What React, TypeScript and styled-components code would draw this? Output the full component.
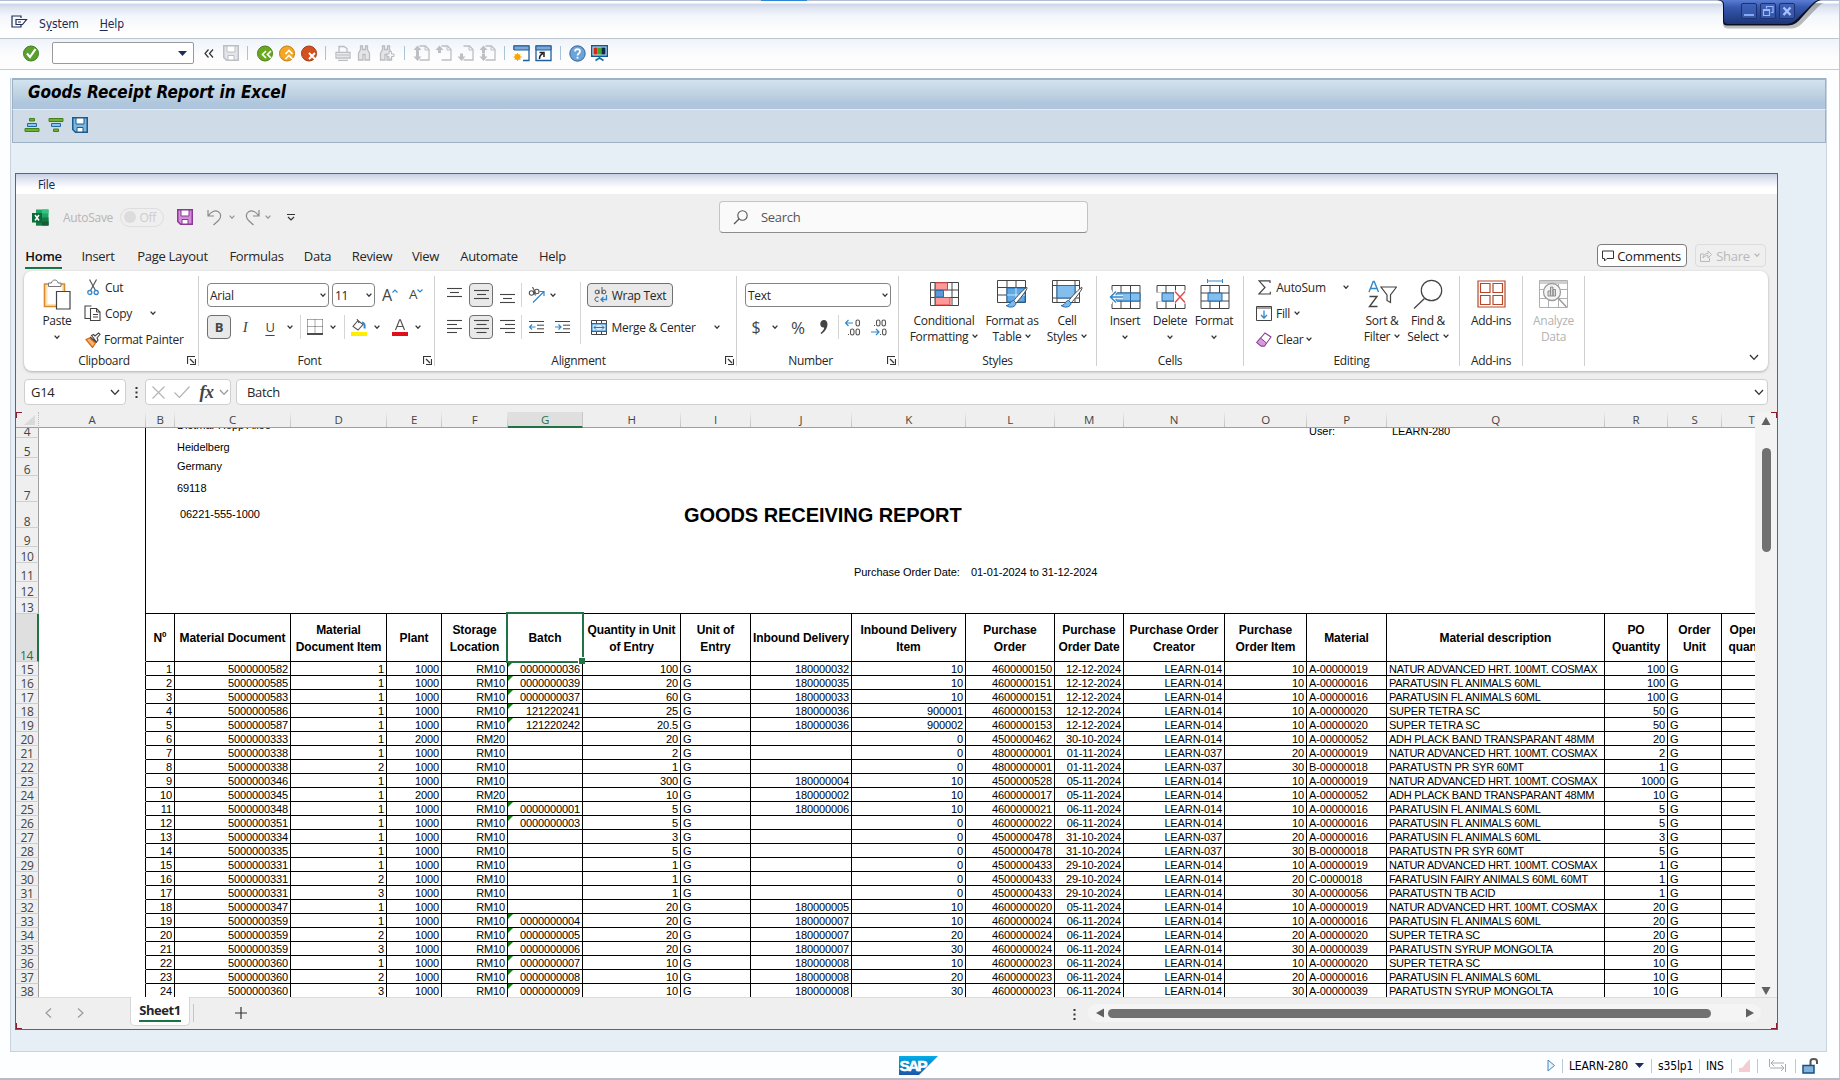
import React from 'react';
import styled, { createGlobalStyle, css } from 'styled-components';

const TAHOMA = `'DejaVu Sans Condensed', 'DejaVu Sans', Tahoma, sans-serif`;
const SEGOE = `'Open Sans', 'Noto Sans', 'Segoe UI', sans-serif`;
const ARIAL = `'Liberation Sans', Arial, sans-serif`;

const Global = createGlobalStyle`
  * { box-sizing: border-box; }
  html, body { margin: 0; padding: 0; overflow: hidden; }
  svg { display: block; flex: none; }
`;

/* ---------- SAP frame ---------- */

const Window = styled.div`
  position: relative;
  display: flex;
  flex-direction: column;
  width: 1840px;
  height: 1080px;
  padding-top: 1px;
  overflow: hidden;
  background: linear-gradient(#b3bdd4, #b3bdd4) top / 100% 1px no-repeat #fdfeff;
  border-right: 1px solid #b9c5d1;
  border-bottom: 2px solid #b7bcc4;
  font-family: ${TAHOMA};
  font-size: 12px;
  color: #1b2a55;
`;

const MenuBar = styled.div`
  display: flex;
  flex: none;
  align-items: center;
  height: 38px;
  padding: 8px 0 0 11px;
  border-bottom: 1px solid #bcc7d1;
  background: linear-gradient(#fff 0, #fff 2px, #cdd6e8 3px, #dfe5f1 7px, #f3f6fb 15px, #fefefe 30px);
`;

const MenuItem = styled.span<{ $ml: number }>`
  margin-left: ${(p) => p.$ml}px;
  letter-spacing: -0.1px;
  white-space: pre;
  u { text-underline-offset: 2px; }
`;

const ToolBar = styled.div`
  display: flex;
  flex: none;
  align-items: center;
  height: 31px;
  padding-bottom: 2px;
  border-bottom: 1px solid #c3ccd6;
  background: linear-gradient(#eff3f9, #fdfdfe 60%);
`;

const Slot = styled.div<{ $w?: number; $ml?: number; $h?: number; $mt?: number }>`
  display: flex;
  flex: none;
  align-items: center;
  justify-content: center;
  width: ${(p) => (p.$w ? `${p.$w}px` : 'auto')};
  height: ${(p) => (p.$h ? `${p.$h}px` : 'auto')};
  margin-left: ${(p) => p.$ml ?? 0}px;
  margin-top: ${(p) => p.$mt ?? 0}px;
`;

const CommandField = styled.div`
  display: flex;
  flex: none;
  align-items: center;
  justify-content: flex-end;
  width: 142px;
  height: 22px;
  margin-left: 12px;
  padding-right: 6px;
  border: 1px solid #9a9a9a;
  border-radius: 2px;
  background: #fff;
`;

const VLine = styled.div<{ $h?: number; $c?: string; $ml?: number; $mt?: number }>`
  flex: none;
  width: 1px;
  height: ${(p) => p.$h ?? 14}px;
  margin-left: ${(p) => p.$ml ?? 0}px;
  margin-top: ${(p) => p.$mt ?? 0}px;
  background: ${(p) => p.$c ?? '#a9c4d8'};
`;

const Content = styled.div`
  display: flex;
  flex: none;
  flex-direction: column;
  width: 1817px;
  height: 974px;
  margin: 8px 0 0 10px;
  border: solid #c9d3df;
  border-width: 0 1px 1px;
  background: #e7eff6;
`;

const TitleStrip = styled.div`
  flex: none;
  display: flex;
  align-items: center;
  height: 31px;
  margin-left: 1px;
  padding: 0 0 6px 15px;
  border: 1px solid #9db2c4;
  border-top-width: 2px;
  border-bottom: 0;
  background: linear-gradient(#d3e3f0, #bcd0df 55%, #b0c8de 75%, #adc4dc);
  color: #000;
  font-size: 17px;
  font-weight: bold;
  font-style: italic;
  letter-spacing: 0;
`;

const AppStrip = styled.div`
  flex: none;
  display: flex;
  align-items: center;
  gap: 7px;
  height: 34px;
  margin-left: 1px;
  padding: 0 0 3px 11px;
  border: 1px solid #9db2c4;
  border-top-color: #e4edf4;
  background: #cfdce7;
`;

const StatusBar = styled.div`
  flex: 1;
  display: flex;
  align-items: center;
  padding: 1px 0 0 899px;
  color: #000;
`;

const SmallText = styled.span<{ $w: number; $ml: number }>`
  flex: none;
  width: ${(p) => p.$w}px;
  margin-left: ${(p) => p.$ml}px;
  margin-top: 1px;
  white-space: nowrap;
  letter-spacing: -0.15px;
`;

const WindowButtons = styled.div`
  position: absolute;
  top: 0;
  left: 1716px;
`;

const TopAccent = styled.div`
  position: absolute;
  top: 0;
  left: 761px;
  width: 46px;
  height: 1px;
  background: #2f86d6;
`;

/* ---------- Excel window ---------- */

const Excel = styled.div`
  position: relative;
  display: flex;
  flex: none;
  flex-direction: column;
  width: 1763px;
  height: 857px;
  margin: 30px 0 0 4px;
  border: 1px solid #5d6670;
  background: #efefef;
  font-family: ${SEGOE};
  font-size: 12px;
  letter-spacing: -0.3px;
  color: #262626;
  overflow: hidden;
`;

const FileBar = styled.div`
  flex: none;
  display: flex;
  align-items: center;
  height: 20px;
  padding: 2px 0 0 22px;
  background: linear-gradient(#c6cfe2 0, #dbe1ee 4px, #fff 14px);
  color: #1b2a55;
  font-family: ${TAHOMA};
  font-size: 12px;
`;

const QuickBar = styled.div`
  flex: none;
  display: flex;
  align-items: center;
  height: 46px;
  padding-left: 16px;
`;

const Muted = styled.span`
  color: #b5b5b5;
`;

const Toggle = styled.div`
  display: flex;
  flex: none;
  align-items: center;
  justify-content: space-between;
  width: 44px;
  height: 19px;
  margin-left: 7px;
  padding: 0 7px 0 3px;
  border: 1px solid #dedede;
  border-radius: 10px;
  color: #cdcdcd;
  i { width: 12px; height: 12px; border-radius: 50%; background: #dcdcdc; }
`;

const SearchBox = styled.div`
  flex: none;
  display: flex;
  align-items: center;
  width: 369px;
  height: 32px;
  margin-left: 419px;
  padding-left: 13px;
  border: 1px solid #c4c4c4;
  border-bottom-color: #8c8c8c;
  border-radius: 4px;
  background: #fafafa;
  color: #555;
  font-size: 13px;
  gap: 12px;
`;

const TabBar = styled.div`
  flex: none;
  display: flex;
  align-items: center;
  height: 31px;
  padding: 2px 0 0 9px;
  font-size: 13px;
`;

const Tab = styled.div<{ $w: number; $ml?: number; $active?: boolean }>`
  flex: none;
  display: flex;
  justify-content: center;
  width: ${(p) => p.$w}px;
  height: 25px;
  margin-left: ${(p) => p.$ml ?? 0}px;
  padding-top: 3px;
  white-space: nowrap;
  border-bottom: 2px solid ${(p) => (p.$active ? '#1a7344' : 'transparent')};
  ${(p) => p.$active && css`font-weight: 600; color: #111;`}
`;

const TabButton = styled.div<{ $w: number; $ml: number; $off?: boolean }>`
  flex: none;
  display: flex;
  align-items: center;
  justify-content: space-between;
  width: ${(p) => p.$w}px;
  height: 23px;
  margin: 0 0 2px ${(p) => p.$ml}px;
  padding: 0 5px 0 4px;
  border: 1px solid ${(p) => (p.$off ? '#dcdcdc' : '#7b7b7b')};
  border-radius: 4px;
  background: ${(p) => (p.$off ? '#efefef' : '#fff')};
  color: ${(p) => (p.$off ? '#b9b9b9' : '#1c1c1c')};
`;

const Ribbon = styled.div`
  flex: none;
  display: flex;
  width: 1744px;
  height: 100px;
  margin-left: 8px;
  border-radius: 8px;
  background: #fff;
  box-shadow: 0 1px 3px rgba(0, 0, 0, 0.28);
`;

const Group = styled.div<{ $w: number }>`
  position: relative;
  flex: none;
  display: flex;
  flex-direction: column;
  width: ${(p) => p.$w}px;
  height: 90px;
  margin-top: 5px;
  border-right: 1px solid #d0d0d0;
`;

const GroupBody = styled.div`
  flex: none;
  display: flex;
  height: 76px;
`;

const GroupLabel = styled.div`
  flex: none;
  display: flex;
  align-items: center;
  justify-content: center;
  height: 17px;
  span { flex: 1; text-align: center; }
`;

const Stack = styled.div<{ $ml?: number; $w?: number; $pt?: number }>`
  flex: none;
  display: flex;
  flex-direction: column;
  width: ${(p) => (p.$w ? `${p.$w}px` : 'auto')};
  margin-left: ${(p) => p.$ml ?? 0}px;
  padding-top: ${(p) => p.$pt ?? 0}px;
`;

const Line = styled.div<{ $h: number; $mt?: number }>`
  display: flex;
  flex: none;
  align-items: center;
  height: ${(p) => p.$h}px;
  margin-top: ${(p) => p.$mt ?? 0}px;
  white-space: nowrap;
`;

const BigButton = styled.div<{ $w: number; $ml?: number; $off?: boolean }>`
  flex: none;
  display: flex;
  flex-direction: column;
  align-items: center;
  width: ${(p) => p.$w}px;
  margin-left: ${(p) => p.$ml ?? 0}px;
  color: ${(p) => (p.$off ? '#b3b3b3' : '#262626')};
  white-space: nowrap;
`;

const BigIcon = styled.div`
  display: flex;
  align-items: center;
  justify-content: center;
  height: 36px;
`;

const BigLabel = styled.div`
  display: flex;
  align-items: center;
  justify-content: center;
  height: 16px;
  gap: 4px;
`;

const Combo = styled.div<{ $w: number; $ml?: number }>`
  flex: none;
  display: flex;
  align-items: center;
  justify-content: space-between;
  width: ${(p) => p.$w}px;
  height: 24px;
  margin-left: ${(p) => p.$ml ?? 0}px;
  padding: 0 2px;
  border: 1px solid #848484;
  border-radius: 4px;
  background: #fff;
`;

const Pressed = styled.div<{ $w: number; $ml?: number }>`
  flex: none;
  display: flex;
  align-items: center;
  justify-content: center;
  gap: 4px;
  width: ${(p) => p.$w}px;
  height: 24px;
  margin-left: ${(p) => p.$ml ?? 0}px;
  border: 1px solid #707070;
  border-radius: 4px;
  background: #e9e9e9;
`;

const Glyph = styled.span<{ $size: number; $serif?: boolean; $bold?: boolean; $it?: boolean; $ul?: boolean; $c?: string }>`
  font-size: ${(p) => p.$size}px;
  line-height: 1;
  color: ${(p) => p.$c ?? '#444'};
  font-weight: ${(p) => (p.$bold ? 700 : 400)};
  font-style: ${(p) => (p.$it ? 'italic' : 'normal')};
  font-family: ${(p) => (p.$serif ? `'Liberation Serif', serif` : 'inherit')};
  text-decoration: ${(p) => (p.$ul ? 'underline' : 'none')};
  text-underline-offset: 3px;
`;

const FormulaRow = styled.div`
  flex: none;
  display: flex;
  height: 26px;
  margin-top: 8px;
  padding-left: 8px;
  font-size: 13px;
`;

const Field = styled.div<{ $w: number; $ml?: number; $pl?: number; $pr?: number }>`
  flex: none;
  display: flex;
  align-items: center;
  justify-content: space-between;
  width: ${(p) => p.$w}px;
  height: 26px;
  margin-left: ${(p) => p.$ml ?? 0}px;
  padding: 0 ${(p) => p.$pr ?? 5}px 0 ${(p) => p.$pl ?? 6}px;
  border: 1px solid #cfcfcf;
  border-radius: 4px;
  background: #fff;
`;

/* ---------- Sheet ---------- */

const SheetArea = styled.div`
  flex: none;
  display: flex;
  height: 585px;
  margin-top: 7px;
`;

const Sheet = styled.div`
  flex: none;
  width: 1739px;
  height: 585px;
  overflow: hidden;
  background: #fff;
`;

const COLS = [107, 29, 116, 96, 55, 66, 75, 98, 70, 101, 114, 89, 69, 101, 82, 80, 218, 63, 54, 60];
const TEMPLATE = `23px ${COLS.map((c) => `${c}px`).join(' ')}`;

const ColumnHeads = styled.div`
  display: grid;
  grid-template-columns: ${TEMPLATE};
  height: 16px;
  background: #efefef;
  border-bottom: 1px solid #9f9f9f;
`;

const ColumnHead = styled.div<{ $on?: boolean }>`
  position: relative;
  display: flex;
  align-items: center;
  justify-content: center;
  height: ${(p) => (p.$on ? 16 : 15)}px;
  padding-top: ${(p) => (p.$on ? 2 : 1)}px;
  border-right: 1px solid;
  border-image: linear-gradient(#efefef, #bdbdbd) 1;
  background: ${(p) => (p.$on ? '#dfdfdf' : 'transparent')};
  color: ${(p) => (p.$on ? '#1f7246' : '#444')};
  ${(p) => p.$on && css`border-bottom: 2px solid #217346; border-image: none; border-right-color: #c8c8c8;`}
  font-size: 11.5px;
  line-height: 12px;
`;

const Corner = styled.div`
  display: flex;
  align-items: flex-end;
  justify-content: flex-end;
  padding: 0 3px 3px 0;
  border-right: 1px dotted #bbb;
`;

const RowHead = styled.div<{ $on?: boolean }>`
  display: flex;
  align-items: flex-end;
  justify-content: center;
  height: 100%;
  border-right: ${(p) => (p.$on ? '2px solid #217346' : '1px solid #9f9f9f')};
  border-bottom: 1px solid #cfcfcf;
  background: ${(p) => (p.$on ? '#dfdfdf' : '#efefef')};
  color: ${(p) => (p.$on ? '#1f7246' : '#444')};
  font-size: 12px;
  line-height: 11px;
`;

const FreeRow = styled.div<{ $h: number; $last?: boolean }>`
  display: flex;
  align-items: center;
  height: ${(p) => p.$h}px;
  overflow: hidden;
  font-family: ${ARIAL};
  ${RowHead} { flex: none; width: 23px; font-family: ${SEGOE}; }
`;

const Margin = styled.div`
  flex: none;
  width: 107px;
  height: 100%;
  border-right: 1px solid #000;
`;

const FreeBody = styled.div<{ $line?: boolean }>`
  flex: 1;
  display: flex;
  align-items: center;
  height: 100%;
  padding-bottom: 1px;
  border-bottom: ${(p) => (p.$line ? '1px solid #000' : '0')};
`;

const FreeText = styled.span<{ $ml: number; $w: number; $mt?: number; $title?: boolean }>`
  flex: none;
  width: ${(p) => p.$w}px;
  margin-left: ${(p) => p.$ml}px;
  margin-top: ${(p) => p.$mt ?? 0}px;
  color: #000;
  font-size: ${(p) => (p.$title ? 20 : 11)}px;
  font-weight: ${(p) => (p.$title ? 700 : 400)};
  line-height: 14px;
  letter-spacing: -0.06px;
  white-space: nowrap;
`;

const DataRow = styled.div<{ $h: number }>`
  display: grid;
  grid-template-columns: ${TEMPLATE};
  grid-template-rows: ${(p) => p.$h}px;
  height: ${(p) => p.$h}px;
`;

const Cell = styled.div<{ $left?: boolean; $blank?: boolean; $tight?: boolean }>`
  position: relative;
  height: 100%;
  padding: 0 ${(p) => (p.$left ? 0 : 2)}px 0 ${(p) => (p.$left ? 2 : 0)}px;
  border-right: 1px solid #000;
  border-bottom: 1px solid ${(p) => (p.$blank ? '#fff' : '#000')};
  background: #fff;
  color: #000;
  font-family: ${ARIAL};
  font-size: 11px;
  line-height: 15px;
  letter-spacing: ${(p) => (p.$tight ? -0.26 : -0.12)}px;
  text-align: ${(p) => (p.$left ? 'left' : 'right')};
  white-space: nowrap;
`;

const ErrorMark = styled.i`
  position: absolute;
  top: 0;
  left: 0;
  border-top: 5px solid #138013;
  border-right: 5px solid transparent;
`;

const HeadCell = styled(Cell)`
  display: flex;
  flex-direction: column;
  align-items: center;
  justify-content: center;
  padding: 2px 0 0;
  font-size: 12px;
  font-weight: 700;
  line-height: 17px;
  letter-spacing: -0.08px;
  sup { font-size: 8px; line-height: 0; vertical-align: 5px; }
`;

const Selection = styled.div`
  position: absolute;
  z-index: 2;
  inset: -2px -2px -2px -2px;
  border: 2px solid #217346;
  &::after {
    content: '';
    position: absolute;
    right: -3px;
    bottom: -3px;
    width: 6px;
    height: 6px;
    border: solid #fff;
    border-width: 1px 0 0 1px;
    background: #217346;
  }
`;

const VScroll = styled.div`
  flex: none;
  display: flex;
  flex-direction: column;
  align-items: center;
  width: 22px;
  height: 585px;
  padding-top: 4px;
  background: #f3f3f3;
  i { width: 9px; height: 104px; margin: 22px 0 434px; border-radius: 5px; background: #717171; }
`;

const SheetTabs = styled.div`
  flex: 1;
  display: flex;
  align-items: flex-start;
  border-top: 1px solid #dcdcdc;
`;

const SheetTab = styled.div`
  flex: none;
  display: flex;
  justify-content: center;
  width: 60px;
  height: 29px;
  margin: -1px 0 0 44px;
  padding-top: 4px;
  border: 1px solid #d6d6d6;
  border-top: 0;
  border-radius: 0 0 5px 5px;
  background: #fff;
  span {
    height: 21px;
    border-bottom: 2px solid #1a7344;
    font-size: 13px;
    font-weight: 700;
    letter-spacing: -0.4px;
    color: #262626;
  }
`;

const HScroll = styled.div`
  flex: none;
  display: flex;
  align-items: center;
  justify-content: space-between;
  width: 673px;
  height: 18px;
  margin: 6px 0 0 9px;
  padding: 0 6px 0 7px;
  border-radius: 9px;
  background: #f4f4f4;
  i { width: 603px; height: 9px; margin: 0 auto 0 3px; border-radius: 5px; background: #717171; }
`;

const RedCorner = styled.i<{ $x: number; $y: number; $r?: boolean; $b?: boolean }>`
  position: absolute;
  z-index: 3;
  left: ${(p) => p.$x}px;
  top: ${(p) => p.$y}px;
  width: 6px;
  height: 6px;
  border: solid #8b1a2b;
  border-width: ${(p) => `${p.$b ? 0 : 1}px ${p.$r ? 1 : 0}px ${p.$b ? 1 : 0}px ${p.$r ? 0 : 1}px`};
`;

/* ---------- Icons ---------- */

const Svg = ({ w = 16, h = 16, children, box }: { w?: number; h?: number; box?: string; children: React.ReactNode }) => (
  <svg width={w} height={h} viewBox={box ?? `0 0 ${w} ${h}`} fill="none">
    {children}
  </svg>
);

const Chevron = ({ w = 7, c = '#333', s = 1.3 }: { w?: number; c?: string; s?: number }) => (
  <Svg w={w} h={w * 0.7} box="0 0 10 7">
    <path d="M1 1l4 4.4L9 1" stroke={c} strokeWidth={s * (10 / w)} />
  </Svg>
);

const Triangle = ({ dir, c = '#606060' }: { dir: 'up' | 'down' | 'left' | 'right'; c?: string }) => {
  const d = { up: 'M5 1l4.5 8h-9z', down: 'M5 9L.5 1h9z', left: 'M1 5l8-4.5v9z', right: 'M9 5L1 .5v9z' }[dir];
  return <Svg w={10} h={10}><path d={d} fill={c} /></Svg>;
};

const Drop = ({ c = '#1e2b5e' }) => <Svg w={9} h={5}><path d="M0 0h9L4.500 5z" fill={c} /></Svg>;

const Disk = ({ c, f, paper = '#fff' }: { c: string; f: string; paper?: string }) => (
  <Svg w={16} h={16}>
    <path d="M.75.75h14.500v14.500H3.500L.75 12.500z" fill={f} stroke={c} strokeWidth="1.500" />
    <path d="M4 1h8v6H4zM5 15v-4.500h6V15z" fill={paper} stroke={c} />
  </Svg>
);

const Round = ({ c, edge, children }: { c: string; edge: string; children: React.ReactNode }) => (
  <Svg w={17} h={17}><circle cx="8" cy="8.500" r="7.500" fill={c} stroke={edge} />{children}</Svg>
);

const Printer = () => (
  <Svg w={16} h={16}><path d="M4 8V1.500h5l3 2V8M1 7.500h14V13H1zM3 15.500h10" stroke="#b9bcc0" strokeWidth="1.300" /><path d="M2 9h12v2.500H2z" fill="#d0d2d5" /></Svg>
);

const Binoculars = ({ plus }: { plus?: boolean }) => (
  <Svg w={16} h={16}>
    <path d="M3.500 1h2v3.500h3V1h2v3.500l2 4v6.500H8V9.500H6V15H1.500V8.500l2-4z" stroke="#b9bcc0" fill="#e4e5e7" strokeWidth="1.300" />
    {plus && <path d="M10 6.500h2.500v2.500H15v2.500h-2.500V14H10v-2.500H8V9h2z" fill="#f5f6f8" stroke="#b9bcc0" />}
  </Svg>
);

const Page = ({ up, down, both }: { up?: boolean; down?: boolean; both?: boolean }) => (
  <Svg w={17} h={16}>
    <path d="M6.500 1h6l3.500 3.500v10.500H6.500" stroke="#bcbfc3" strokeWidth="1.300" />
    <path d="M12 1.500V5h3.500" stroke="#bcbfc3" />
    {(up || both) && <path d="M4.500 .5l4 4.500H6v3H3V5H.5z" fill="#bcbfc3" />}
    {(down || both) && <path d="M4.500 16L.5 11.500H3v-3h3v3h2.500z" fill="#bcbfc3" />}
    {both && up && <path d="M3 4h3v8H3z" fill="#bcbfc3" />}
  </Svg>
);

const PaneIcon = ({ kind }: { kind: 'new' | 'link' }) => (
  <Svg w={17} h={17}>
    {kind === 'new' ? (
      <>
        <path d="M1 5V1h15v14.500H1z" fill="#fff" />
        <path d="M1 5V1h15v14.500h-6" stroke="#1f5f9e" strokeWidth="1.300" />
        <path d="M1 1h15v4H1z" fill="#7ba9d6" stroke="#1f5f9e" />
        <circle cx="4.500" cy="12" r="3" fill="#f5a800" />
        <path d="M4.500 8v8M.5 12h8M1.700 9.200l5.600 5.600M7.300 9.200l-5.600 5.600" stroke="#f5a800" />
      </>
    ) : (
      <>
        <path d="M1 1h15v14.500H1z" fill="#fff" stroke="#1f5f9e" strokeWidth="1.300" />
        <path d="M1 1h15v4H1z" fill="#7ba9d6" stroke="#1f5f9e" />
        <path d="M4.500 14c0-3 1-4.500 3.500-5.500M4.500 7.500H9V12" stroke="#222" strokeWidth="1.500" />
      </>
    )}
  </Svg>
);

const HelpIcon = () => (
  <Svg w={17} h={17}>
    <circle cx="8.500" cy="8.500" r="7.700" fill="#6ea3d8" stroke="#2c6297" />
    <path d="M6 6.500C6 3.300 11 3.300 11 6.500c0 2-2.500 2-2.500 4" stroke="#fff" strokeWidth="1.700" /><path d="M7.600 11.800h1.800v1.800H7.600z" fill="#fff" />
  </Svg>
);

const Monitor = () => (
  <Svg w={17} h={17}>
    <path d="M.7.700h15.600v10.600H.7z" fill="#cfe3f2" stroke="#0a5a9a" strokeWidth="1.400" />
    <path d="M2.500 2.500h4v7h-4z" fill="#d42a10" /><path d="M6.500 2.500h4v7h-4z" fill="#3ca534" /><path d="M10.500 2.500h4v7h-4z" fill="#0d2c4c" />
    <path d="M8.500 11v3M4.500 15.500l3-2h2l3 2" stroke="#1568a8" strokeWidth="1.600" />
  </Svg>
);

const Sort = ({ flip }: { flip?: boolean }) => (
  <Svg w={16} h={16}>
    <g transform={flip ? 'matrix(1 0 0 -1 0 16)' : undefined}>
      <path d="M5.500 1.500h5v2.500h-5zM1 11.500h14v3H1z" fill="#6eaf35" stroke="#44801c" />
      <path d="M3.500 6.500h9v3h-9z" fill="#8fc4ea" stroke="#1f6aa5" />
    </g>
  </Svg>
);

const ExcelLogo = () => (
  <Svg w={17} h={17}>
    <path d="M4 .5h12.500v16H4z" fill="#21a366" /><path d="M10 .5h6.500v4H10z" fill="#33c481" />
    <path d="M4 8.500h12.500v8H4z" fill="#107c41" /><path d="M10 12.500h6.500v4H10z" fill="#185c37" />
    <path d="M0 4h10v9.500H0z" fill="#0b6a37" /><path d="M3 6l4 5.500M7 6l-4 5.500" stroke="#fff" strokeWidth="1.500" />
  </Svg>
);

const Undo = ({ flip }: { flip?: boolean }) => (
  <Svg w={15} h={17}>
    <path transform={flip ? 'matrix(-1 0 0 1 15 0)' : undefined} d="M1 1v6h6M1.500 6.500C4 2.500 8 1 11 2.500c3.500 2 3.500 6 .5 9L6.500 16" stroke="#8a8a8a" strokeWidth="1.200" />
  </Svg>
);

const PasteIcon = () => (
  <Svg w={28} h={31}>
    <path d="M1.500 5h20v22.500h-20z" fill="#fbe3b5" stroke="#d88a2c" strokeWidth="1.600" />
    <path d="M4.500 7h14.500v18H4.500z" fill="#fff" />
    <path d="M5.500 7.500V4h3c.5-4 6-4 6.500 0h3v3.500z" fill="#fff" stroke="#777" />
    <path d="M13.500 12.500h13.500v17.500H13.500z" fill="#fff" stroke="#444" strokeWidth="1.200" />
  </Svg>
);

const CutIcon = () => (
  <Svg w={12} h={17}>
    <path d="M2.500.5l6 11M9.500.5l-6 11" stroke="#555" strokeWidth="1.200" />
    <circle cx="2.800" cy="13.500" r="2" stroke="#2f87cd" strokeWidth="1.300" /><circle cx="9.200" cy="13.500" r="2" stroke="#2f87cd" strokeWidth="1.300" />
  </Svg>
);

const CopyIcon = () => (
  <Svg w={17} h={17}>
    <path d="M6 13.500H1V1h6.500" stroke="#444" strokeWidth="1.100" />
    <path d="M6.500 3.500h6l3.500 3.500v8.500H6.500z" fill="#fff" stroke="#444" strokeWidth="1.100" /><path d="M12.500 3.500V7H16M9 9.500h5M9 12h5" stroke="#444" />
  </Svg>
);

const BrushIcon = () => (
  <Svg w={16} h={16}>
    <path d="M1 7.500l3.500-1.500 6 5-3 4.500z" fill="#f6b26b" stroke="#d26e1a" strokeWidth="1.300" />
    <path d="M5 5l6.500 5.500M6.500 3.500l2-1 1.500 1.500 3.500-3 1.500 1.300-3 3.700 1 2-1.500 2z" stroke="#444" fill="#fff" strokeWidth="1.100" />
  </Svg>
);

const Bars = ({ rows, align }: { rows: number[]; align: 'l' | 'c' | 'r' }) => (
  <Svg w={15} h={rows.length * 4}>
    {rows.map((w, i) => {
      const x = align === 'l' ? 0 : align === 'c' ? (15 - w) / 2 : 15 - w;
      return <path key={i} d={`M${x} ${i * 4 + 1.5}h${w}`} stroke="#444" strokeWidth="1.1" />;
    })}
  </Svg>
);

const Indent = ({ right }: { right?: boolean }) => (
  <Svg w={15} h={14}>
    <path d="M0 1.500h15M8 5.200h7M8 8.800h7M0 12.500h15" stroke="#444" />
    <path d={right ? 'M0 7h6M3.500 4.500L6 7 3.500 9.500' : 'M0.500 7h6M3 4.500L.5 7 3 9.500'} stroke="#2f87cd" strokeWidth="1.200" />
  </Svg>
);

const Orientation = () => (
  <Svg w={17} h={16}>
    <g stroke="#555" strokeWidth="1.100"><circle cx="3.500" cy="6" r="2.200" /><path d="M5 4l2.500 4.500" /><circle cx="8.800" cy="4.500" r="2.200" /><path d="M4.500 0l3 6" /></g>
    <path d="M5 15.500L15.500 5M11.500 4.500h4.500v4.500" stroke="#2f87cd" strokeWidth="1.200" />
  </Svg>
);

const BorderIcon = () => (
  <Svg w={16} h={16}>
    <path d="M.5.500h15M.5 7.500h15M.5.500v14M8 .5v14M15.500.5v14" stroke="#555" strokeDasharray="1 1" />
    <path d="M0 15h16" stroke="#111" strokeWidth="1.500" />
  </Svg>
);

const FillColor = () => (
  <Svg w={16} h={17}>
    <path d="M7 1.500L2 7.500l5 3.500 5-5.500zM6 0l2 4" stroke="#555" strokeWidth="1.100" />
    <path d="M11 3.500c2.500 0 3 3 2.500 6" stroke="#2f87cd" strokeWidth="2" /><path d="M0 13h16v4H0z" fill="#ffee00" />
  </Svg>
);

const WrapIcon = () => (
  <Svg w={14} h={16}>
    <g stroke="#555"><circle cx="3" cy="5" r="1.900" /><path d="M5 2.800V7M8 0v7" /><circle cx="10" cy="5" r="1.900" /><path d="M4.500 10.500a2.200 2.200 0 1 0 0 3.500" /></g>
    <path d="M12.500 8v4.500H7M9.500 10L7 12.500 9.500 15" stroke="#2f87cd" strokeWidth="1.300" />
  </Svg>
);

const MergeIcon = () => (
  <Svg w={16} h={15}>
    <path d="M.5.500h15v14H.5zM.5 3.500h15M.5 11.500h15M5.500.500v3M10.500.500v3M5.500 11.500v3M10.500 11.500v3" stroke="#444" />
    <path d="M1 4h14v7H1z" fill="#d6eafa" stroke="#2f87cd" /><path d="M3 7.500h10M5 5.500l-2 2 2 2M11 5.500l2 2-2 2" stroke="#1f77c0" />
  </Svg>
);

const Launcher = () => (
  <Svg w={9} h={9}><path d="M.5 8V.5H8M3 3l4 4M8.500 3v5.500H3" stroke="#333" strokeWidth="1.200" /></Svg>
);

const Decimals = ({ left }: { left?: boolean }) => (
  <Svg w={16} h={17}>
    <g stroke="#555" strokeWidth="1.100">
      {left ? (
        <><rect x="11" y="1" width="3.500" height="6" rx="1.700" /><rect x="5.500" y="10" width="3.500" height="6" rx="1.700" /><rect x="11" y="10" width="3.500" height="6" rx="1.700" /><path d="M3 15.500h1" /></>
      ) : (
        <><rect x="5.500" y="1" width="3.500" height="6" rx="1.700" /><rect x="11" y="1" width="3.500" height="6" rx="1.700" /><rect x="11.500" y="10" width="3.500" height="6" rx="1.700" /><path d="M3 6.500h1M9 15.500h1" /></>
      )}
    </g>
    <path d={left ? 'M.5 4h7.500M3.500 1L.5 4l3 3' : 'M0 13h8M5 10l3 3-3 3'} stroke="#2f87cd" strokeWidth="1.200" />
  </Svg>
);

const CondFormat = () => (
  <Svg w={29} h={24}>
    <path d="M.5.500h28v23H.5zM.5 8h28M.5 15.500h28M5 .5v23M22 .5v23" stroke="#444" />
    <path d="M5.500.800h12v7h-12zM5.500 15.500h14.500v7.500H5.500z" fill="#f99" stroke="#e03c3c" /><path d="M5.500 8.500h8v6.500h-8z" fill="#5b9bd5" stroke="#2b6cb0" />
  </Svg>
);

const FormatTable = ({ cell }: { cell?: boolean }) => (
  <Svg w={31} h={28}>
    {cell ? (
      <><path d="M.5.500h27v22H.5zM.5 5.500h27M.5 18h27M5 .5v22M23 .5v22" stroke="#444" /><path d="M5 5.500h18V18H5z" fill="#83beec" stroke="#1f6ab0" /></>
    ) : (
      <><path d="M.5.500h28v22H.5zM.5 7.500h28M.5 15h28M10 .5v22M19 .5v22" stroke="#444" /><path d="M10 8h18v14H10z" fill="#5ea9e6" stroke="#1f6ab0" /><path d="M10 15h18M19 8v14" stroke="#cfe6fa" /></>
    )}
    <path d="M30 7.500c-1-1-12 11-13.500 13.500l2.500 2C22 20 31 9 30 7.500z" fill="#fff" stroke="#444" />
    <path d="M16.500 20.500c-3 0-3 3-4.500 4-1.500 1-3 1-3 1 4 3 10 1.500 10-2.500z" fill="#7db9ea" stroke="#1f6ab0" />
  </Svg>
);

const CellsIcon = ({ kind }: { kind: 'insert' | 'delete' | 'format' }) => (
  <Svg w={32} h={30}>
    <path d="M3 6.500h28v23H3zM3 14h28M3 22h28M12 6.500v23M21.500 6.500v23" stroke="#444" />
    {kind === 'insert' && <><path d="M7 14h24v8H7z" fill="#83beec" stroke="#1f6ab0" /><path d="M21.500 14v8" stroke="#1f6ab0" /><path d="M0 11h3v14H0z" fill="#fff" /><path d="M14 18H1M7 12l-6 6 6 6" stroke="#fff" strokeWidth="3.500" /><path d="M14 18H1M7 12.500L1.500 18 7 23.500" stroke="#2f87cd" strokeWidth="1.500" /></>}
    {kind === 'delete' && <><path d="M0 13.500h8v9H0z" fill="#fff" /><path d="M8 14h12v8H8z" fill="#83beec" stroke="#1f6ab0" /><path d="M20 11.500h12v13H20z" fill="#fff" /><path d="M21 12.500l10 11M31 12.500l-10 11" stroke="#e5484d" strokeWidth="1.400" /></>}
    {kind === 'format' && <><path d="M10 14h14v8H10z" fill="#83beec" stroke="#1f6ab0" /><path d="M9 2h16M9.500 0v4M24.500 0v4" stroke="#2f87cd" /></>}
  </Svg>
);

const SumIcon = () => <Svg w={13} h={15}><path d="M12 3V.8H1L7 7.500.8 14H12.300v-2.200" stroke="#444" strokeWidth="1.200" /></Svg>;
const FillDown = () => <Svg w={16} h={15}><path d="M.5.500h15v14H.5z" stroke="#444" fill="#fff" /><path d="M0 2h16" stroke="#444" /><path d="M8 4.500v7M5 9l3 3 3-3" stroke="#2f87cd" strokeWidth="1.300" /></Svg>;
const Eraser = () => <Svg w={16} h={15}><path d="M9 1l6 4-6.500 9H5L.8 10.500z" fill="#fff" stroke="#8d3f9c" strokeWidth="1.100" /><path d="M4.500 6L.8 10.500 5 14h3.500l2-3z" fill="#d69bdc" stroke="#8d3f9c" /></Svg>;

const SortFilter = () => (
  <Svg w={29} h={28}>
    <path d="M1 12L5.200 1.500h1L10.500 12M2.500 8.500H9" stroke="#2f87cd" strokeWidth="1.400" />
    <path d="M1.500 16.500h7.500L1.500 26.500h8" stroke="#444" strokeWidth="1.400" />
    <path d="M13 7h15.500l-6 8v7.500l-3.500-2V15z" fill="#fff" stroke="#444" strokeWidth="1.200" />
  </Svg>
);

const FindIcon = () => <Svg w={30} h={30}><circle cx="18.500" cy="11.500" r="10.200" stroke="#444" strokeWidth="1.200" /><path d="M11.500 19.500L1 29.500" stroke="#444" strokeWidth="1.300" /></Svg>;
const AddIns = () => <Svg w={29} h={28}><path d="M1 1h27v26H1zM3.500 3.500h9.500v9H3.500zM16 3.500h9.500v9H16zM3.500 15.500h9.500v9H3.500zM16 15.500h9.500v9H16z" stroke="#b5482a" strokeWidth="1.200" /></Svg>;
const Analyze = () => (
  <Svg w={29} h={28}>
    <path d="M.5.500h28v27H.5zM.5 9.500h28M.5 18.500h28M9.500 4v24M19.500 4v24" stroke="#b0b0b0" /><path d="M1 1h27v3H1z" fill="#cfcfcf" />
    <circle cx="13" cy="12" r="8.500" fill="#f4f4f4" stroke="#9d9d9d" strokeWidth="1.300" /><path d="M19 18l8.500 9" stroke="#9d9d9d" strokeWidth="1.500" />
    <path d="M9 11h2.500v5H9zM11.500 7H14v9h-2.500zM14 9.500h2.500V16H14z" stroke="#8d8d8d" fill="#d8d8d8" />
  </Svg>
);

const WindowNotch = () => (
  <Svg w={108} h={30}>
    <defs>
      <linearGradient id="notch" x1="0" y1="0" x2="0" y2="1"><stop offset="0" stopColor="#5a7cd2" /><stop offset=".3" stopColor="#3658ae" /><stop offset="1" stopColor="#1d3678" /></linearGradient>
    </defs>
    <path d="M2 1.500c4 0 5 1 5 5V24c0 3 2 4.500 5 4.500h62c6 0 9-2 13-6l14-14.500c3-3 5-4.500 7-5z" fill="#000" opacity=".25" />
    <path d="M1 0c4 .5 6 1.500 6 5v16c0 3 1 4.500 4 4.500h59c6 0 9-1 13-5L96 6c3-3 5-5 9-6z" fill="#0b1020" />
    <path d="M3 0c4 .5 5 2 5 5v14.500c0 3 1 4.500 4 4.500h57c5 0 8-1 12-5L94 6c3-3 5-5 8-6z" fill="url(#notch)" />
    <g stroke="#1b3170" fill="#4062b8" fillOpacity=".6"><rect x="25.500" y="3.500" width="15" height="15" rx="1.500" /><rect x="44.500" y="3.500" width="15" height="15" rx="1.500" /><rect x="63.500" y="3.500" width="15" height="15" rx="1.500" /></g>
    <path d="M28 15h10" stroke="#8fb0ff" strokeWidth="1.800" />
    <path d="M50.500 8.500V6.500h6.500v6h-2M47.500 9.500h6v6h-6zM47 10.500h7" stroke="#9ab8ff" strokeWidth="1.200" />
    <path d="M67.500 7.500l7 7.500M74.500 7.500l-7 7.500" stroke="#a9c2ff" strokeWidth="2.400" />
  </Svg>
);

const SapLogo = () => (
  <svg width="39" height="19" viewBox="0 0 39 19">
    <defs><linearGradient id="sap" x1="0" y1="0" x2="0" y2="1"><stop offset="0" stopColor="#00aee8" /><stop offset="1" stopColor="#1c56a8" /></linearGradient></defs>
    <path d="M0 0h39L20 19H0z" fill="url(#sap)" />
    <text x="0.500" y="15" fontFamily="Liberation Sans, Arial, sans-serif" fontWeight="700" fontSize="15.500" textLength="28" stroke="#fff" strokeWidth=".5" fill="#fff">SAP</text>
  </svg>
);

/* ---------- Data ---------- */

const NATUR = 'NATUR ADVANCED HRT. 100MT. COSMAX';
const PARA = 'PARATUSIN FL ANIMALS 60ML';
const SUPER = 'SUPER TETRA SC';
const ADH = 'ADH PLACK BAND TRANSPARANT 48MM';
const SYR = 'PARATUSTN PR SYR 60MT';
const SYRUP = 'PARATUSTN SYRUP MONGOLTA';

type Rec = [string, string, string, string, string, string, string, string, string, string, string, string, string, string];
/* doc, item, plant, batch, qty, delivery, delivery item, order, date, creator, order item, material, description, PO qty */
const RECORDS: Rec[] = [
  ['582', '1', '1', '0000000036', '100', '32', '10', '4600000150', '12-12', '014', '10', 'A-00000019', NATUR, '100'],
  ['585', '1', '1', '0000000039', '20', '35', '10', '4600000151', '12-12', '014', '10', 'A-00000016', PARA, '100'],
  ['583', '1', '1', '0000000037', '60', '33', '10', '4600000151', '12-12', '014', '10', 'A-00000016', PARA, '100'],
  ['586', '1', '1', '121220241', '25', '36', '900001', '4600000153', '12-12', '014', '10', 'A-00000020', SUPER, '50'],
  ['587', '1', '1', '121220242', '20.5', '36', '900002', '4600000153', '12-12', '014', '10', 'A-00000020', SUPER, '50'],
  ['333', '1', '2', '', '20', '', '0', '4500000462', '30-10', '014', '10', 'A-00000052', ADH, '20'],
  ['338', '1', '1', '', '2', '', '0', '4800000001', '01-11', '037', '20', 'A-00000019', NATUR, '2'],
  ['338', '2', '1', '', '1', '', '0', '4800000001', '01-11', '037', '30', 'B-00000018', SYR, '1'],
  ['346', '1', '1', '', '300', '04', '10', '4500000528', '05-11', '014', '10', 'A-00000019', NATUR, '1000'],
  ['345', '1', '2', '', '10', '02', '10', '4600000017', '05-11', '014', '10', 'A-00000052', ADH, '10'],
  ['348', '1', '1', '0000000001', '5', '06', '10', '4600000021', '06-11', '014', '10', 'A-00000016', PARA, '5'],
  ['351', '1', '1', '0000000003', '5', '', '0', '4600000022', '06-11', '014', '10', 'A-00000016', PARA, '5'],
  ['334', '1', '1', '', '3', '', '0', '4500000478', '31-10', '037', '20', 'A-00000016', PARA, '3'],
  ['335', '1', '1', '', '5', '', '0', '4500000478', '31-10', '037', '30', 'B-00000018', SYR, '5'],
  ['331', '1', '1', '', '1', '', '0', '4500000433', '29-10', '014', '10', 'A-00000019', NATUR, '1'],
  ['331', '2', '1', '', '1', '', '0', '4500000433', '29-10', '014', '20', 'C-0000018', 'FARATUSIN FAIRY ANIMALS 60ML 60MT', '1'],
  ['331', '3', '1', '', '1', '', '0', '4500000433', '29-10', '014', '30', 'A-00000056', 'PARATUSTN TB ACID', '1'],
  ['347', '1', '1', '', '20', '05', '10', '4600000020', '05-11', '014', '10', 'A-00000019', NATUR, '20'],
  ['359', '1', '1', '0000000004', '20', '07', '10', '4600000024', '06-11', '014', '10', 'A-00000016', PARA, '20'],
  ['359', '2', '1', '0000000005', '20', '07', '20', '4600000024', '06-11', '014', '20', 'A-00000020', SUPER, '20'],
  ['359', '3', '1', '0000000006', '20', '07', '30', '4600000024', '06-11', '014', '30', 'A-00000039', SYRUP, '20'],
  ['360', '1', '1', '0000000007', '10', '08', '10', '4600000023', '06-11', '014', '10', 'A-00000020', SUPER, '10'],
  ['360', '2', '1', '0000000008', '10', '08', '20', '4600000023', '06-11', '014', '20', 'A-00000016', PARA, '10'],
  ['360', '3', '1', '0000000009', '10', '08', '30', '4600000023', '06-11', '014', '30', 'A-00000039', SYRUP, '10'],
];

const toCells = (r: Rec, i: number) => [
  String(i + 1), `5000000${r[0]}`, r[1], `${r[2]}000`, `RM${r[2]}0`, r[3], r[4], 'G', r[5] && `1800000${r[5]}`, r[6],
  r[7], `${r[8]}-2024`, `LEARN-${r[9]}`, r[10], r[11], r[12], r[13], 'G', '',
];
const LEFT = new Set([7, 14, 15, 17]);

const HEADINGS: string[][] = [
  ['N'], ['Material Document'], ['Material', 'Document Item'], ['Plant'], ['Storage', 'Location'], ['Batch'],
  ['Quantity in Unit', 'of Entry'], ['Unit of', 'Entry'], ['Inbound Delivery'], ['Inbound Delivery', 'Item'],
  ['Purchase', 'Order'], ['Purchase', 'Order Date'], ['Purchase Order', 'Creator'], ['Purchase', 'Order Item'],
  ['Material'], ['Material description'], ['PO', 'Quantity'], ['Order', 'Unit'], ['Opened', 'quantity'],
];

const FREE_ROWS: { n: number; h: number; body?: React.ReactNode }[] = [
  { n: 4, h: 10, body: <><FreeText $ml={31} $w={1132} $mt={-16}>Dietmar Hopp Allee</FreeText><FreeText $ml={0} $w={83} $mt={-3}>User:</FreeText><FreeText $ml={0} $w={80} $mt={-3}>LEARN-280</FreeText></> },
  { n: 5, h: 20, body: <FreeText $ml={31} $w={100} $mt={-2}>Heidelberg</FreeText> },
  { n: 6, h: 18, body: <FreeText $ml={31} $w={100} $mt={-2}>Germany</FreeText> },
  { n: 7, h: 26, body: <FreeText $ml={31} $w={100} $mt={-2}>69118</FreeText> },
  { n: 8, h: 26, body: <><FreeText $ml={34} $w={504} $mt={-2}>06221-555-1000</FreeText><FreeText $ml={0} $w={300} $title>GOODS RECEIVING REPORT</FreeText></> },
  { n: 9, h: 19 },
  { n: 10, h: 16 },
  { n: 11, h: 19, body: <><FreeText $ml={708} $w={117}>Purchase Order Date:</FreeText><FreeText $ml={0} $w={160}>01-01-2024 to 31-12-2024</FreeText></> },
  { n: 12, h: 16 },
  { n: 13, h: 16 },
];

/* ---------- Sections ---------- */

const SapToolbar = () => (
  <ToolBar>
    <Slot $ml={22} $w={18}><Round c="#5aa02c" edge="#3f7d1c"><path d="M4 8.500l3 3.500 5.500-8" stroke="#fff" strokeWidth="2.200" /></Round></Slot>
    <CommandField><Drop /></CommandField>
    <Slot $ml={6} $w={18}><Svg w={10} h={9}><path d="M4.500 .5L1 4.500l3.500 4M9 .5L5.500 4.500l3.500 4" stroke="#333" strokeWidth="1.200" /></Svg></Slot>
    <Slot $ml={4} $w={18}><Disk c="#bcbfc3" f="#e3e5e8" /></Slot>
    <VLine $ml={7} />
    <Slot $ml={8} $w={18}><Round c="#6aa81f" edge="#4b7f14"><path d="M9 6L5.500 9.500 9 13M14 6l-3.500 3.500L14 13" stroke="#fff" strokeWidth="1.700" /></Round></Slot>
    <Slot $ml={4} $w={18}><Round c="#f5a623" edge="#c47d0c"><path d="M6.500 9L10 5.500 13.500 9M6.500 14l3.500-3.500 3.500 3.500" stroke="#fff" strokeWidth="1.700" /></Round></Slot>
    <Slot $ml={4} $w={18}><Round c="#d4501e" edge="#a03a12"><path d="M8 8l6 6M14 8l-6 6" stroke="#fff" strokeWidth="2" /></Round></Slot>
    <VLine $ml={7} />
    <Slot $ml={8} $w={18}><Printer /></Slot>
    <Slot $ml={4} $w={18}><Binoculars /></Slot>
    <Slot $ml={4} $w={18}><Binoculars plus /></Slot>
    <VLine $ml={8} />
    <Slot $ml={7} $w={18}><Page up both /></Slot>
    <Slot $ml={4} $w={18}><Page up /></Slot>
    <Slot $ml={4} $w={18}><Page down /></Slot>
    <Slot $ml={4} $w={18}><Page both /></Slot>
    <VLine $ml={8} />
    <Slot $ml={7} $w={18}><PaneIcon kind="new" /></Slot>
    <Slot $ml={4} $w={18}><PaneIcon kind="link" /></Slot>
    <VLine $ml={8} />
    <Slot $ml={7} $w={18}><HelpIcon /></Slot>
    <Slot $ml={4} $w={18}><Monitor /></Slot>
  </ToolBar>
);

const TABS: [string, number, number][] = [
  ['Home', 37, 0], ['Insert', 32, 20], ['Page Layout', 71, 23], ['Formulas', 53, 22], ['Data', 27, 21],
  ['Review', 40, 21], ['View', 27, 20], ['Automate', 56, 22], ['Help', 27, 22],
];

const Title = ({ children, launch }: { children: React.ReactNode; launch?: boolean }) => (
  <GroupLabel><span>{children}</span>{launch && <Slot $w={14}><Launcher /></Slot>}</GroupLabel>
);

const Big = ({ w, ml, icon, a, b, chevron, off }: { w: number; ml?: number; icon: React.ReactNode; a: string; b?: string; chevron?: boolean; off?: boolean }) => (
  <BigButton $w={w} $ml={ml} $off={off}>
    <BigIcon>{icon}</BigIcon>
    <BigLabel>{a}</BigLabel>
    <BigLabel>{b}{chevron && <Slot $mt={b ? 0 : 3}><Chevron w={6} /></Slot>}</BigLabel>
  </BigButton>
);

const RibbonPanel = () => (
  <Ribbon>
    <Group $w={175}>
      <GroupBody>
        <Big w={40} ml={13} icon={<PasteIcon />} a="Paste" chevron />
        <Stack $ml={6}>
          <Line $h={23}><Slot $w={19}><CutIcon /></Slot><Slot $ml={3}>Cut</Slot></Line>
          <Line $h={28}><Slot $w={19}><CopyIcon /></Slot><Slot $ml={3} $w={27}>Copy</Slot><Slot $ml={16} $w={10}><Chevron w={6} /></Slot></Line>
          <Line $h={25}><Slot $w={19}><BrushIcon /></Slot><Slot $ml={2}>Format Painter</Slot></Line>
        </Stack>
      </GroupBody>
      <Title launch>Clipboard</Title>
    </Group>

    <Group $w={236}>
      <GroupBody>
        <Stack $ml={8} $pt={7}>
          <Line $h={24}>
            <Combo $w={122}>Arial<Chevron w={6} /></Combo>
            <Combo $w={43} $ml={3}>11<Chevron w={6} /></Combo>
            <Slot $ml={6} $w={18}><Glyph $size={16}>A</Glyph><Slot $mt={-9}><Svg w={6} h={4}><path d="M.5 3.500L3 1l2.500 2.500" stroke="#2f87cd" strokeWidth="1.200" /></Svg></Slot></Slot>
            <Slot $ml={9} $w={16}><Glyph $size={13.5}>A</Glyph><Slot $mt={-9}><Svg w={6} h={4}><path d="M.5 .5L3 3 5.500.5" stroke="#2f87cd" strokeWidth="1.200" /></Svg></Slot></Slot>
          </Line>
          <Line $h={24} $mt={8}>
            <Pressed $w={24}><Glyph $size={13} $bold>B</Glyph></Pressed>
            <Slot $ml={6} $w={16}><Glyph $size={15} $serif $it>I</Glyph></Slot>
            <Slot $ml={9} $w={16}><Glyph $size={13} $ul>U</Glyph></Slot>
            <Slot $ml={7} $w={10}><Chevron w={6} /></Slot>
            <VLine $ml={5} $h={24} $c="#d5d5d5" />
            <Slot $ml={6} $w={16}><BorderIcon /></Slot>
            <Slot $ml={5} $w={10}><Chevron w={6} /></Slot>
            <VLine $ml={6} $h={24} $c="#d5d5d5" />
            <Slot $ml={6} $w={16}><FillColor /></Slot>
            <Slot $ml={5} $w={10}><Chevron w={6} /></Slot>
            <Slot $ml={10} $w={16}><Svg w={16} h={17}><path d="M3.500 11L7.600.800h.8L12.500 11M5 7.500h6" stroke="#555" strokeWidth="1.200" /><path d="M0 13h16v4H0z" fill="#e0101a" /></Svg></Slot>
            <Slot $ml={5} $w={10}><Chevron w={6} /></Slot>
          </Line>
        </Stack>
      </GroupBody>
      <Title launch>Font</Title>
    </Group>

    <Group $w={302}>
      <GroupBody>
        <Stack $ml={12} $pt={7}>
          <Line $h={24}>
            <Slot $w={15} $mt={-4}><Bars rows={[15, 9, 15]} align="c" /></Slot>
            <Pressed $ml={7} $w={24}><Bars rows={[15, 9, 15]} align="c" /></Pressed>
            <Slot $ml={7} $w={15} $mt={8}><Bars rows={[15, 9, 15]} align="c" /></Slot>
          </Line>
          <Line $h={24} $mt={8}>
            <Slot $w={15}><Bars rows={[15, 10, 15, 10]} align="l" /></Slot>
            <Pressed $ml={7} $w={24}><Bars rows={[15, 10, 15, 10]} align="c" /></Pressed>
            <Slot $ml={7} $w={15}><Bars rows={[15, 10, 15, 10]} align="r" /></Slot>
          </Line>
        </Stack>
        <Stack $ml={6} $pt={7}>
          <Line $h={24}><VLine $h={24} $c="#d5d5d5" /><Slot $ml={6} $w={17}><Orientation /></Slot><Slot $ml={3} $w={10}><Chevron w={6} /></Slot></Line>
          <Line $h={24} $mt={8}><VLine $h={24} $c="#d5d5d5" /><Slot $ml={7} $w={15}><Indent /></Slot><Slot $ml={11} $w={15}><Indent right /></Slot></Line>
        </Stack>
        <VLine $ml={10} $mt={6} $h={62} $c="#d5d5d5" />
        <Stack $ml={6} $pt={7}>
          <Line $h={24}><Pressed $w={86}><WrapIcon /><Slot $w={54}>Wrap Text</Slot></Pressed></Line>
          <Line $h={24} $mt={8}><Slot $ml={4} $w={16}><MergeIcon /></Slot><Slot $ml={4} $w={85}>Merge &amp; Center</Slot><Slot $ml={16} $w={10}><Chevron w={6} /></Slot></Line>
        </Stack>
      </GroupBody>
      <Title launch>Alignment</Title>
    </Group>

    <Group $w={162}>
      <GroupBody>
        <Stack $ml={8} $pt={7}>
          <Line $h={24}><Combo $w={146}>Text<Chevron w={6} /></Combo></Line>
          <Line $h={24} $mt={8}>
            <Slot $ml={3} $w={16}><Glyph $size={16}>$</Glyph></Slot>
            <Slot $ml={6} $w={10}><Chevron w={6} /></Slot>
            <Slot $ml={10} $w={16}><Glyph $size={17}>%</Glyph></Slot>
            <Slot $ml={10} $w={16}><Svg w={8} h={14}><path d="M4 0c5 0 5 9-2.500 14l-1-1C3.500 10.500 4.500 8.500 4 7.500-1 8-1 0 4 0z" fill="#444" /></Svg></Slot>
            <VLine $ml={6} $h={24} $c="#d5d5d5" />
            <Slot $ml={6} $w={16}><Decimals left /></Slot>
            <Slot $ml={10} $w={16}><Decimals /></Slot>
          </Line>
        </Stack>
      </GroupBody>
      <Title launch>Number</Title>
    </Group>

    <Group $w={198}>
      <GroupBody>
        <Big w={70} ml={10} icon={<CondFormat />} a="Conditional" b="Formatting" chevron />
        <Big w={60} ml={3} icon={<FormatTable />} a="Format as" b="Table" chevron />
        <Big w={44} ml={3} icon={<FormatTable cell />} a="Cell" b="Styles" chevron />
      </GroupBody>
      <Title>Styles</Title>
    </Group>

    <Group $w={147}>
      <GroupBody>
        <Big w={40} ml={8} icon={<CellsIcon kind="insert" />} a="Insert" chevron />
        <Big w={40} ml={5} icon={<CellsIcon kind="delete" />} a="Delete" chevron />
        <Big w={42} ml={3} icon={<CellsIcon kind="format" />} a="Format" chevron />
      </GroupBody>
      <Title>Cells</Title>
    </Group>

    <Group $w={216}>
      <GroupBody>
        <Stack $ml={11} $w={102}>
          <Line $h={23}><Slot $w={18}><SumIcon /></Slot><Slot $ml={3} $w={50}>AutoSum</Slot><Slot $ml={15} $w={10}><Chevron w={6} /></Slot></Line>
          <Line $h={28}><Slot $w={18}><FillDown /></Slot><Slot $ml={3}>Fill</Slot><Slot $ml={3} $w={8}><Chevron w={6} /></Slot></Line>
          <Line $h={25}><Slot $w={18}><Eraser /></Slot><Slot $ml={3}>Clear</Slot><Slot $ml={2} $w={8}><Chevron w={6} /></Slot></Line>
        </Stack>
        <Big w={44} ml={3} icon={<SortFilter />} a="Sort &" b="Filter" chevron />
        <Big w={44} ml={2} icon={<FindIcon />} a="Find &" b="Select" chevron />
      </GroupBody>
      <Title>Editing</Title>
    </Group>

    <Group $w={63}>
      <GroupBody><Big w={62} icon={<AddIns />} a="Add-ins" /></GroupBody>
      <Title>Add-ins</Title>
    </Group>

    <Group $w={62}>
      <GroupBody><Big w={61} icon={<Analyze />} a="Analyze" b="Data" off /></GroupBody>
    </Group>
    <Slot $ml={163} $mt={71} $w={12} $h={30}><Chevron w={10} /></Slot>
  </Ribbon>
);

const Grid = () => (
  <SheetArea>
    <Sheet>
      <ColumnHeads>
        <Corner><Svg w={11} h={10}><path d="M11 0v10H0z" fill="#dadada" /></Svg></Corner>
        {COLS.map((_, i) => {
          const name = String.fromCharCode(65 + i);
          return <ColumnHead key={name} $on={name === 'G'}>{name}</ColumnHead>;
        })}
      </ColumnHeads>
      {FREE_ROWS.map((r) => (
        <FreeRow key={r.n} $h={r.h}>
          <RowHead>{r.n}</RowHead>
          <Margin />
          <FreeBody $line={r.n === 13}>{r.body}</FreeBody>
        </FreeRow>
      ))}
      <DataRow $h={48}>
        <RowHead $on>14</RowHead>
        <Cell $blank />
        {HEADINGS.map((lines, i) => (
          <HeadCell key={i}>
            {lines.map((t) => <div key={t}>{t}{t === 'N' && <sup>0</sup>}</div>)}
            {lines[0] === 'Batch' && <Selection />}
          </HeadCell>
        ))}
      </DataRow>
      {RECORDS.map((r, i) => (
        <DataRow key={i} $h={14}>
          <RowHead>{15 + i}</RowHead>
          <Cell $blank />
          {toCells(r, i).map((v, c) => (
            <Cell key={c} $left={LEFT.has(c)} $tight={c === 15}>{c === 5 && v && <ErrorMark />}{v}</Cell>
          ))}
        </DataRow>
      ))}
    </Sheet>
    <VScroll><Triangle dir="up" /><i /><Triangle dir="down" /></VScroll>
  </SheetArea>
);

const ExcelWindow = () => (
  <Excel>
    <FileBar>File</FileBar>
    <QuickBar>
      <ExcelLogo />
      <Slot $ml={14} $w={50}><Muted>AutoSave</Muted></Slot>
      <Toggle><i />Off</Toggle>
      <Slot $ml={13} $w={16}><Disk c="#8a3a94" f="#d58bdc" /></Slot>
      <Slot $ml={14} $w={15}><Undo /></Slot>
      <Slot $ml={5} $w={10}><Chevron w={6} c="#999" /></Slot>
      <Slot $ml={8} $w={15}><Undo flip /></Slot>
      <Slot $ml={3} $w={10}><Chevron w={6} c="#999" /></Slot>
      <Slot $ml={9} $w={18}><Svg w={8} h={8}><path d="M0 1.500h8M1 4l3 3 3-3" stroke="#333" strokeWidth="1.200" /></Svg></Slot>
      <SearchBox>
        <Svg w={16} h={15}><circle cx="9.500" cy="5.500" r="4.700" stroke="#555" strokeWidth="1.100" /><path d="M6 9l-5 5" stroke="#555" strokeWidth="1.200" /></Svg>
        Search
      </SearchBox>
    </QuickBar>
    <TabBar>
      {TABS.map(([name, w, ml]) => <Tab key={name} $w={w} $ml={ml} $active={name === 'Home'}>{name}</Tab>)}
      <TabButton $w={90} $ml={1031}><Svg w={12} h={12}><path d="M.5 1h11v7.500H5L2.500 11V8.500h-2z" stroke="#333" /></Svg>Comments</TabButton>
      <TabButton $w={71} $ml={8} $off><Svg w={12} h={12}><path d="M4 4H.5v7.500h9V8M3 8c0-3 2-4.500 5-4.500V1l3.500 3.500L8 8V5.500C6 5.500 4 6 3 8z" stroke="#b9b9b9" /></Svg>Share<Chevron w={6} c="#b9b9b9" /></TabButton>
    </TabBar>
    <RibbonPanel />
    <FormulaRow>
      <Field $w={102}>G14<Chevron w={10} /></Field>
      <Slot $ml={5} $w={10}><Svg w={3} h={11}><path d="M.5 0h2v2h-2zM.5 4.500h2v2h-2zM.5 9h2v2h-2z" fill="#333" /></Svg></Slot>
      <Field $w={86} $ml={4} $pl={6} $pr={1}>
        <Svg w={13} h={13}><path d="M.5.500l12 12M12.500.500l-12 12" stroke="#b5b5b5" strokeWidth="1.200" /></Svg>
        <Slot $ml={4}><Svg w={16} h={12}><path d="M.5 6.500l5 5L15.500.5" stroke="#b5b5b5" strokeWidth="1.200" /></Svg></Slot>
        <Slot $ml={4}><Glyph $size={18} $serif $it $bold>fx</Glyph></Slot>
        <Chevron w={10} c="#999" />
      </Field>
      <Field $w={1532} $ml={5} $pl={10} $pr={3}>Batch<Chevron w={10} /></Field>
    </FormulaRow>
    <Grid />
    <SheetTabs>
      <Slot $ml={26} $w={12} $h={30}><Svg w={7} h={10}><path d="M6 .5L1 5l5 4.500" stroke="#9a9a9a" strokeWidth="1.200" /></Svg></Slot>
      <Slot $ml={20} $w={12} $h={30}><Svg w={7} h={10}><path d="M1 .5L6 5 1 9.500" stroke="#9a9a9a" strokeWidth="1.200" /></Svg></Slot>
      <SheetTab><span>Sheet1</span></SheetTab>
      <VLine $ml={3} $mt={6} $h={18} $c="#c6c6c6" />
      <Slot $ml={40} $w={14} $h={30}><Svg w={12} h={12}><path d="M6 0v12M0 6h12" stroke="#333" strokeWidth="1.200" /></Svg></Slot>
      <Slot $ml={821} $w={10} $h={32}><Svg w={3} h={11}><path d="M.5 0h2v2h-2zM.5 4.500h2v2h-2zM.5 9h2v2h-2z" fill="#333" /></Svg></Slot>
      <HScroll><Triangle dir="left" /><i /><Triangle dir="right" /></HScroll>
    </SheetTabs>
    <RedCorner $x={0} $y={238} />
    <RedCorner $x={1755} $y={238} $r />
    <RedCorner $x={0} $y={849} $b />
    <RedCorner $x={1755} $y={849} $r $b />
  </Excel>
);

export default function App() {
  return (
    <Window>
      <Global />
      <MenuBar>
        <Slot $mt={-5}><Svg w={17} h={13}><path d="M10 3V1H1v11h9v-2M5 4.500h10.500l-4 5H5zM7 7h3" stroke="#1f2f5a" strokeWidth="1.200" /></Svg></Slot>
        <MenuItem $ml={11}>S<u>y</u>stem</MenuItem>
        <MenuItem $ml={21}><u>H</u>elp</MenuItem>
      </MenuBar>
      <SapToolbar />
      <Content>
        <TitleStrip>Goods Receipt Report in Excel</TitleStrip>
        <AppStrip><Sort /><Slot $w={1} $ml={-7} /><Sort flip /><Slot $ml={1}><Disk c="#1a5c8e" f="#7fb6dd" /></Slot></AppStrip>
        <ExcelWindow />
      </Content>
      <StatusBar>
        <SapLogo />
        <Slot $ml={609} $w={9}><Svg w={9} h={13}><path d="M1 1v11l6.500-5.500z" stroke="#4a86b8" fill="#e9f3fb" /></Svg></Slot>
        <VLine $ml={6} $c="#c2c8d0" />
        <SmallText $ml={6} $w={62}>LEARN-280</SmallText>
        <Slot $ml={4} $w={9}><Drop /></Slot>
        <VLine $ml={7} $c="#c2c8d0" />
        <SmallText $ml={6} $w={36}>s35lp1</SmallText>
        <VLine $ml={5} $c="#c2c8d0" />
        <SmallText $ml={6} $w={20}>INS</SmallText>
        <VLine $ml={5} $c="#c2c8d0" />
        <Slot $ml={6} $w={12}><Svg w={11} h={13}><path d="M0 13V9l3 0 4-5 4-4v13z" fill="#f4cdd2" /></Svg></Slot>
        <VLine $ml={7} $c="#c2c8d0" />
        <Slot $ml={10} $w={18}><Svg w={17} h={13}><path d="M.5 0v8M16.500 5v8M2 4h13M5 1L2 4l3 3M1 9h14M12 6l3 3-3 3" stroke="#a5abb3" /></Svg></Slot>
        <VLine $ml={9} $c="#c2c8d0" />
        <Slot $ml={6} $w={17}><Svg w={17} h={16}><path d="M8.500 7V3.500c0-3.300 6.500-3.300 6.500 0V6" stroke="#555" strokeWidth="2" /><path d="M1 7.500h11V15H1z" fill="#7fb2dc" stroke="#1b4f7c" strokeWidth="1.500" /></Svg></Slot>
      </StatusBar>
      <TopAccent />
      <WindowButtons><WindowNotch /></WindowButtons>
    </Window>
  );
}
